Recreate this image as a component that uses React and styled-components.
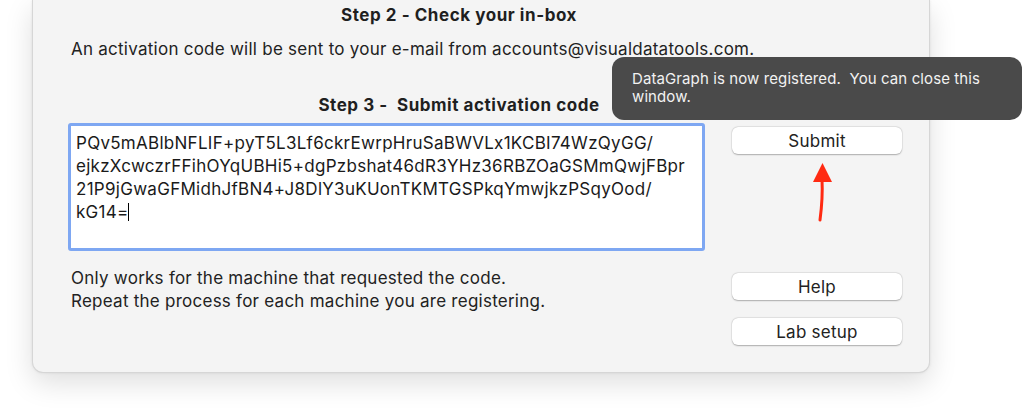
import React from 'react';
import styled, { createGlobalStyle } from 'styled-components';

const GlobalStyle = createGlobalStyle`
  html, body {
    margin: 0;
    padding: 0;
    background: #ffffff;
    font-family: Inter, "Liberation Sans", sans-serif;
  }
`;

const CODE_LINES = [
  'PQv5mABlbNFLIF+pyT5L3Lf6ckrEwrpHruSaBWVLx1KCBI74WzQyGG/',
  'ejkzXcwczrFFihOYqUBHi5+dgPzbshat46dR3YHz36RBZOaGSMmQwjFBpr',
  '21P9jGwaGFMidhJfBN4+J8DlY3uKUonTKMTGSPkqYmwjkzPSqyOod/',
  'kG14=',
];

const App = () => {
  return (
    <Page>
      <GlobalStyle />
      <Window>
        <Heading>Step 2 - Check your in-box</Heading>
        <Text>An activation code will be sent to your e-mail from accounts@visualdatatools.com.</Text>
        <Heading spaced>Step 3 -&nbsp; Submit activation code</Heading>
        <Grid>
          <CodeBox>
            {CODE_LINES.map((line, i) => (
              <div key={i}>
                {line}
                {i === CODE_LINES.length - 1 && <Caret />}
              </div>
            ))}
          </CodeBox>
          <Column>
            <Button top={4}>Submit</Button>
            <Arrow width="170" height="70" viewBox="0 0 170 70">
              <path d="M90 25 C90.5 35 90 51 88 66" stroke="#ff2a12" strokeWidth="3" fill="none" strokeLinecap="round" />
              <path d="M90.5 9 L81 28 L100 28 Z" fill="#ff2a12" />
            </Arrow>
          </Column>
          <Notes>
            <Text>Only works for the machine that requested the code.</Text>
            <Text>Repeat the process for each machine you are registering.</Text>
          </Notes>
          <Column gap={18} top={22}>
            <Button>Help</Button>
            <Button>Lab setup</Button>
          </Column>
        </Grid>
      </Window>
      <Tooltip>DataGraph is now registered.&nbsp; You can close this window.</Tooltip>
    </Page>
  );
};

const Page = styled.div`
  position: relative;
  width: 1024px;
  height: 409px;
  padding: 0 94px 0 32px;
  box-sizing: border-box;
  overflow: hidden;
`;

const Window = styled.div`
  width: 898px;
  height: 373px;
  box-sizing: border-box;
  background: #f4f4f4;
  border: 1px solid #d6d6d6;
  border-top: none;
  border-radius: 0 0 11px 11px;
  box-shadow: 0 10px 28px rgba(0, 0, 0, 0.13), 0 0 3px rgba(0, 0, 0, 0.08);
  padding: 4px 27px 0 35px;
  color: #1f1f1f;
`;

const Heading = styled.div`
  font-size: 17px;
  font-weight: 700;
  letter-spacing: 0.55px;
  line-height: 23px;
  text-align: center;
  padding-right: 52px;
  margin-top: ${({ spaced }) => (spaced ? '33px' : '0')};
`;

const Text = styled.div`
  font-size: 17px;
  letter-spacing: 0.25px;
  line-height: 23px;
  margin-top: 11px;
  padding-left: 3px;
  color: #222;
`;

const Grid = styled.div`
  display: grid;
  grid-template-columns: 637px 170px;
  column-gap: 27px;
  margin-top: 6px;
  align-items: start;
`;

const CodeBox = styled.div`
  height: 128px;
  box-sizing: border-box;
  background: #ffffff;
  border: 3px solid #7ea7f2;
  border-radius: 3px;
  padding: 6px 5px;
  font-size: 17px;
  letter-spacing: 0.28px;
  line-height: 23px;
  white-space: pre;
  color: #1a1a1a;
`;

const Caret = styled.span`
  display: inline-block;
  width: 1.5px;
  height: 18px;
  background: #000;
  vertical-align: -3px;
  margin-left: -1px;
`;

const Column = styled.div`
  display: flex;
  flex-direction: column;
  gap: ${({ gap }) => gap || 0}px;
  margin-top: ${({ top }) => top || 0}px;
`;

const Button = styled.div`
  height: 27px;
  margin-top: ${({ top }) => top || 0}px;
  box-sizing: border-box;
  background: #ffffff;
  border-radius: 6px;
  box-shadow: 0 0.5px 1.5px rgba(0, 0, 0, 0.28), 0 0 0 0.5px rgba(0, 0, 0, 0.06);
  display: flex;
  align-items: center;
  justify-content: center;
  font-size: 17px;
  letter-spacing: 0.25px;
  color: #222;
`;

const Arrow = styled.svg`
  display: block;
`;

const Notes = styled.div`
  & > div {
    margin-top: 0;
  }
  & > div:first-child {
    margin-top: 16px;
  }
`;

const Tooltip = styled.div`
  position: absolute;
  left: 612px;
  top: 57px;
  width: 410px;
  height: 63px;
  box-sizing: border-box;
  padding: 13px 30px 0 20px;
  background: #4a4a4a;
  border-radius: 12px;
  color: #f2f2f2;
  font-size: 15px;
  letter-spacing: 0.1px;
  line-height: 18px;
`;

export default App;
